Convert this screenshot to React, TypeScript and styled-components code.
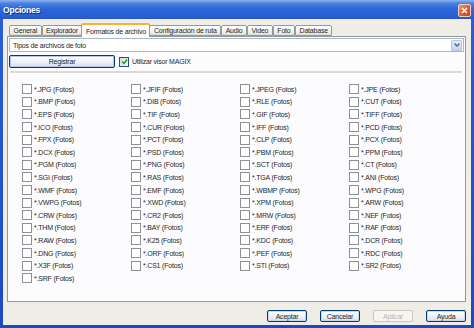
import React from 'react';
import styled, { createGlobalStyle } from 'styled-components';

const GlobalStyle = createGlobalStyle`
  html, body {
    margin: 0;
    padding: 0;
    background: #ffffff;
  }
  body {
    font-family: 'Liberation Sans', Arial, sans-serif;
    font-size: 7px;
    letter-spacing: -0.2px;
    color: #262626;
  }
`;

const formats = [
  'JPG', 'JFIF', 'JPEG', 'JPE',
  'BMP', 'DIB', 'RLE', 'CUT',
  'EPS', 'TIF', 'GIF', 'TIFF',
  'ICO', 'CUR', 'IFF', 'PCD',
  'FPX', 'PCT', 'CLP', 'PCX',
  'DCX', 'PSD', 'PBM', 'PPM',
  'PGM', 'PNG', 'SCT', 'CT',
  'SGI', 'RAS', 'TGA', 'ANI',
  'WMF', 'EMF', 'WBMP', 'WPG',
  'VWPG', 'XWD', 'XPM', 'ARW',
  'CRW', 'CR2', 'MRW', 'NEF',
  'THM', 'BAY', 'ERF', 'RAF',
  'RAW', 'K25', 'KDC', 'DCR',
  'DNG', 'ORF', 'PEF', 'RDC',
  'X3F', 'CS1', 'STI', 'SR2',
  'SRF'
];

const tabs = [
  'General',
  'Explorador',
  'Formatos de archivo',
  'Configuración de ruta',
  'Audio',
  'Video',
  'Foto',
  'Database'
];

const Window = styled.div`
  width: 474px;
  height: 328px;
  display: flex;
  flex-direction: column;
  background: linear-gradient(180deg, #2a5fd6 0%, #1c4bbf 100%);
  box-sizing: border-box;
`;

const TitleBar = styled.div`
  height: 19px;
  flex: none;
  display: flex;
  align-items: center;
  justify-content: space-between;
  padding: 0 3px 0 3px;
  background: linear-gradient(180deg, #8fb2ee 0%, #4a82e2 18%, #2f66d8 45%, #2a5fd6 80%, #2757c8 100%);
`;

const Title = styled.span`
  font-weight: bold;
  font-size: 8.5px;
  color: #ffffff;
  text-shadow: 1px 1px 0 #10307a;
  letter-spacing: -0.2px;
  margin-top: 1px;
`;

const CloseButton = styled.div`
  width: 11px;
  height: 11px;
  margin-top: 2px;
  border: 1px solid #f4d0c4;
  border-radius: 2px;
  background: linear-gradient(135deg, #f09a78 0%, #e0592e 55%, #c9401a 100%);
  display: flex;
  align-items: center;
  justify-content: center;
`;

const Client = styled.div`
  flex: 1;
  margin: 0 3px 3px 3px;
  background: #efede6;
  display: flex;
  flex-direction: column;
  padding: 3px 5px 0 4px;
`;

const TabRow = styled.div`
  display: flex;
  align-items: flex-end;
  height: 14px;
  padding-left: 2px;
  position: relative;
  z-index: 1;
`;

const Tab = styled.div<{ $active?: boolean }>`
  height: ${p => (p.$active ? '14px' : '11px')};
  margin-bottom: ${p => (p.$active ? '-1px' : '0')};
  padding: 0 3.5px;
  display: flex;
  align-items: center;
  box-sizing: border-box;
  border: 1px solid #919b9c;
  border-bottom: ${p => (p.$active ? 'none' : '1px solid #919b9c')};
  border-top: ${p => (p.$active ? '2px solid #f4b43a' : '1px solid #919b9c')};
  border-radius: 2px 2px 0 0;
  margin-left: ${p => (p.$active ? '-1px' : '0')};
  margin-right: ${p => (p.$active ? '-1px' : '0')};
  background: ${p => (p.$active ? '#fcfcfe' : 'linear-gradient(180deg, #ffffff 0%, #f0f0ea 70%, #dedcd4 100%)')};
  white-space: nowrap;
`;

const Panel = styled.div`
  height: 263px;
  border: 1px solid #919b9c;
  background: #fcfcfe;
  padding: 1px 1px 0 1px;
  display: flex;
  flex-direction: column;
`;

const Combo = styled.div`
  height: 12px;
  border: 1px solid #a9b8c8;
  background: #ffffff;
  display: flex;
  align-items: center;
  justify-content: space-between;
  padding-left: 3px;
`;

const ComboArrow = styled.div`
  width: 9px;
  height: 9px;
  margin-right: 1px;
  border: 1px solid #b9c7de;
  border-radius: 1px;
  background: linear-gradient(180deg, #e4ecfb 0%, #c3d3f3 100%);
  display: flex;
  align-items: center;
  justify-content: center;
`;

const ActionRow = styled.div`
  display: flex;
  align-items: center;
  gap: 4px;
  margin-top: 3px;
  height: 13px;
`;

const WideButton = styled.div`
  width: 106px;
  height: 13px;
  box-sizing: border-box;
  border: 1px solid #003c74;
  border-radius: 2px;
  background: linear-gradient(180deg, #ffffff 0%, #eef0f6 60%, #d8dde9 100%);
  box-shadow: inset 0 0 0 1px #b5c8ef;
  display: flex;
  align-items: center;
  justify-content: center;
`;

const CheckRow = styled.label`
  display: flex;
  align-items: center;
  gap: 3px;
`;

const Box = styled.span<{ $checked?: boolean }>`
  width: 8px;
  height: 8px;
  flex: none;
  border: 1px solid ${p => (p.$checked ? '#1c5180' : '#8d9196')};
  background: ${p => (p.$checked ? 'linear-gradient(135deg, #dcdcd6 0%, #f6f6f4 100%)' : '#ffffff')};
  display: flex;
  align-items: center;
  justify-content: center;
`;

const Separator = styled.div`
  height: 2px;
  margin: 3px 2px 0 1px;
  background: #dcdad2;
  border-bottom: 1px solid #ffffff;
`;

const FormatGrid = styled.div`
  display: grid;
  grid-template-columns: repeat(4, 109px);
  grid-auto-rows: 12.6px;
  padding: 9px 0 0 13px;
`;

const FormatItem = styled.label`
  display: flex;
  align-items: center;
  gap: 2px;
  white-space: nowrap;
`;

const Footer = styled.div`
  display: flex;
  justify-content: flex-end;
  gap: 13px;
  padding: 8px 0 0 0;
`;

const DialogButton = styled.div<{ $disabled?: boolean }>`
  width: 40px;
  height: 12px;
  box-sizing: border-box;
  border: 1px solid ${p => (p.$disabled ? '#c9c7ba' : '#003c74')};
  border-radius: 2px;
  background: ${p =>
    p.$disabled ? '#f6f5f2' : 'linear-gradient(180deg, #ffffff 0%, #eef0f6 60%, #d6dbe7 100%)'};
  box-shadow: ${p => (p.$disabled ? 'none' : 'inset 0 0 0 1px #c9d6ef')};
  color: ${p => (p.$disabled ? '#b8b6aa' : '#262626')};
  display: flex;
  align-items: center;
  justify-content: center;
`;

export default function App() {
  return (
    <>
      <GlobalStyle />
      <Window>
        <TitleBar>
          <Title>Opciones</Title>
          <CloseButton>
            <svg width="7" height="7" viewBox="0 0 7 7">
              <path d="M1 1 L6 6 M6 1 L1 6" stroke="#ffffff" strokeWidth="1.5" />
            </svg>
          </CloseButton>
        </TitleBar>
        <Client>
          <TabRow>
            {tabs.map(t => (
              <Tab key={t} $active={t === 'Formatos de archivo'}>
                {t}
              </Tab>
            ))}
          </TabRow>
          <Panel>
            <Combo>
              <span>Tipos de archivos de foto</span>
              <ComboArrow>
                <svg width="6" height="4" viewBox="0 0 6 4">
                  <path d="M0.5 0.5 L3 3 L5.5 0.5" stroke="#4d6185" strokeWidth="1.3" fill="none" />
                </svg>
              </ComboArrow>
            </Combo>
            <ActionRow>
              <WideButton>Registrar</WideButton>
              <CheckRow>
                <Box $checked>
                  <svg width="7" height="7" viewBox="0 0 7 7">
                    <path d="M1 3.5 L3 5.5 L6 1.5" stroke="#21a121" strokeWidth="1.5" fill="none" />
                  </svg>
                </Box>
                Utilizar visor MAGIX
              </CheckRow>
            </ActionRow>
            <Separator />
            <FormatGrid>
              {formats.map(f => (
                <FormatItem key={f}>
                  <Box />
                  *.{f} (Fotos)
                </FormatItem>
              ))}
            </FormatGrid>
          </Panel>
          <Footer>
            <DialogButton>Aceptar</DialogButton>
            <DialogButton>Cancelar</DialogButton>
            <DialogButton $disabled>Aplicar</DialogButton>
            <DialogButton>Ayuda</DialogButton>
          </Footer>
        </Client>
      </Window>
    </>
  );
}
